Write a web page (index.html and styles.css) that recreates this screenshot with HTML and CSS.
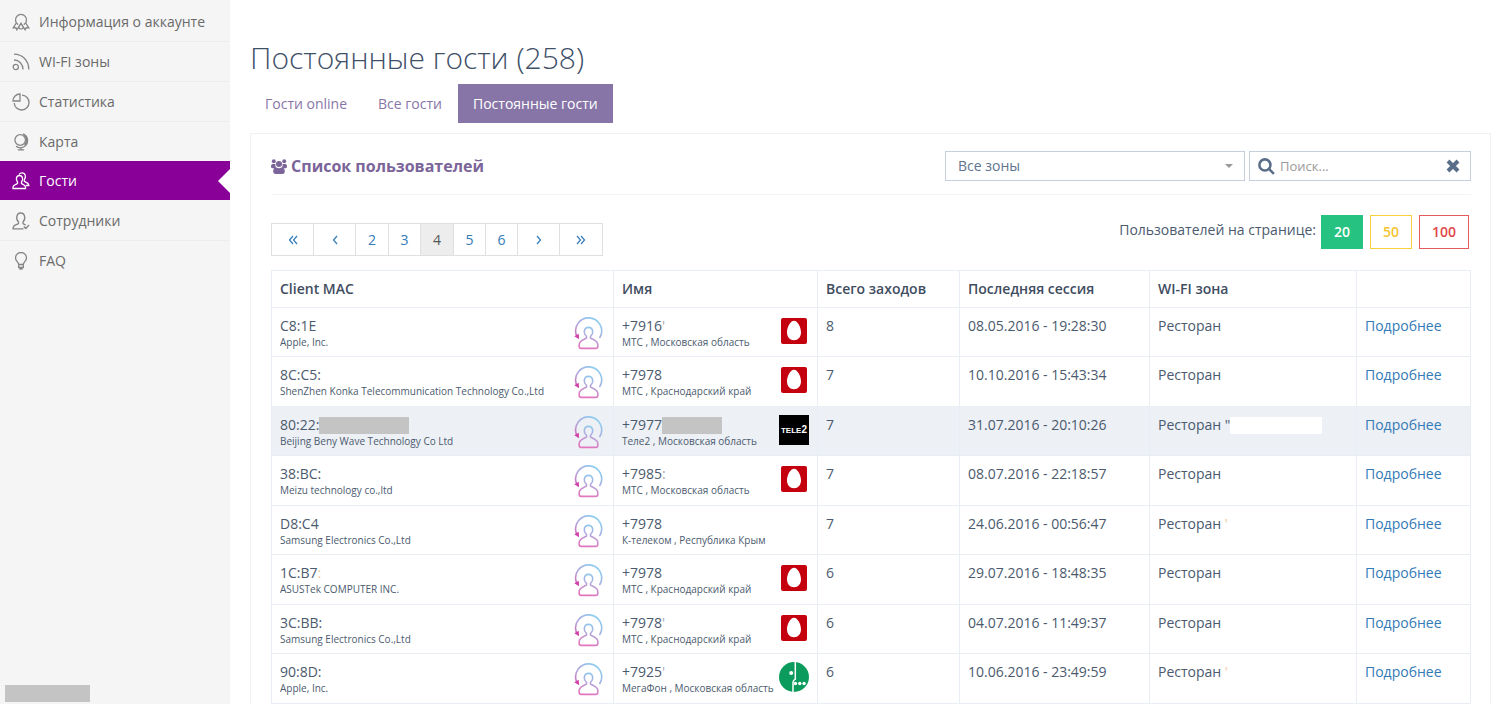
FILE: index.html
```
<!DOCTYPE html>
<html lang="ru">
<head>
<meta charset="utf-8">
<title>Постоянные гости</title>
<meta name="viewport" content="width=device-width, initial-scale=1">
<link rel="stylesheet" href="styles.css">
</head>
<body>
<svg class="sprite" width="0" height="0" aria-hidden="true">
  <defs>
    <linearGradient id="guest-arc" gradientUnits="userSpaceOnUse" x1="20" y1="2" x2="2" y2="24">
      <stop offset="0" stop-color="#8ecdf0"/>
      <stop offset="0.55" stop-color="#b3a6dc"/>
      <stop offset="1" stop-color="#d060b4"/>
    </linearGradient>
    <linearGradient id="guest-body" gradientUnits="userSpaceOnUse" x1="17" y1="11" x2="12" y2="32">
      <stop offset="0" stop-color="#8fcaee"/>
      <stop offset="0.5" stop-color="#b8a2da"/>
      <stop offset="1" stop-color="#e276bd"/>
    </linearGradient>
    <symbol id="guest" viewBox="0 0 30 34">
      <path d="M2.500 19.500A13 13 0 1 1 25.800 21.500" fill="none" stroke="url(#guest-arc)" stroke-width="1.600" stroke-linecap="round"/>
      <path d="M0.300 20.300 4.800 17.800 5 23.200Z" fill="#d23fa8"/>
      <path d="M12.500 22v-1.600c-1.700-1.400-2.400-3.200-2.200-5 .3-2.500 1.900-4 4.200-4s3.900 1.500 4.200 4c.2 1.800-.5 3.600-2.200 5V22c2.800 1.600 7.300 2.600 7.300 6.500v2c0 1.200-.8 1.900-1.900 1.900H7.100c-1.100 0-1.900-.7-1.900-1.900v-2c0-3.900 4.500-4.900 7.300-6.500Z" fill="none" stroke="url(#guest-body)" stroke-width="1.600" stroke-linejoin="round"/>
    </symbol>
    <symbol id="mts" viewBox="0 0 30 30">
      <rect x="2" y="2" width="26" height="26" rx="2" fill="#c4000f"/>
      <path d="M15 4.800c3.500 0 7 6.200 7 11.500 0 4.800-2.900 8-7 8s-7-3.200-7-8c0-5.300 3.500-11.500 7-11.500Z" fill="#fff"/>
    </symbol>
    <symbol id="megafon" viewBox="0 0 30 30">
      <circle cx="15" cy="15" r="15" fill="#0b9c5d"/>
      <path d="M16.300 0v17.200c-1.600.8-2.300 1.800-2.300 3.300V30" fill="none" stroke="#fff" stroke-width="1.500"/>
      <circle cx="12.200" cy="11" r="2" fill="#fff"/>
      <circle cx="16.500" cy="21.500" r="1.700" fill="#fff"/>
      <circle cx="20.800" cy="21.500" r="1.700" fill="#fff"/>
      <circle cx="25.100" cy="21.500" r="1.700" fill="#fff"/>
    </symbol>
  </defs>
</svg>

<div class="layout">
  <aside class="sidebar">
    <nav class="menu">
      <a class="menu-item" href="#"><svg class="menu-icon" viewBox="0 0 18 18"><path d="M6.200 11.600a5.500 5.500 0 1 1 5.600 0"/><path d="M4.300 10 1.200 14.800l2.600-.1 1.100 2.100L9 10.300l4.100 6.500 1.100-2.100 2.600.1L13.700 10M9 10.300 6.500 14.500l2.200 1.800M9 10.300l2.500 4.200-2.200 1.800"/></svg>Информация о аккаунте</a>
      <a class="menu-item" href="#"><svg class="menu-icon" viewBox="0 0 18 18"><circle cx="3.800" cy="14" r="2.600"/><path d="M2 7c5 0 9 4 9 9.500M2 1.200c8.500 0 14.800 6.500 14.800 15.300"/></svg>WI-FI зоны</a>
      <a class="menu-item" href="#"><svg class="menu-icon" viewBox="0 0 18 18"><path d="M10 2.200A7.400 7.400 0 1 1 2.200 10"/><path d="M8 1v7H1A7 7 0 0 1 8 1Z"/></svg>Статистика</a>
      <a class="menu-item" href="#"><svg class="menu-icon" viewBox="0 0 18 18"><circle cx="8.200" cy="7" r="5.300"/><path d="M11 .8a7.300 7.300 0 0 1 4.600 6.700 7.200 7.200 0 0 1-11.600 5.700M12.500 2.300a6.800 6.800 0 0 1 0 9.500M9 14.500v2M5.800 16.800h6.400"/></svg>Карта</a>
      <a class="menu-item active" href="#" aria-current="page"><svg class="menu-icon" viewBox="0 0 18 18"><path d="M5.500 11.500V10C3.600 7.800 4 3.500 7.500 3.500s3.900 4.300 2 6.500v1.500c1.200 1 4 1.200 4 3.500v1.500H1V15c0-2.300 3.300-2.500 4.500-3.500Z"/><path d="M7 2.500C7.700 1.300 8.900.8 10 .8c3.700 0 4.200 4.400 2.300 6.900v1.600c1.200 1 4.500 1.200 4.500 4.200h-3"/></svg>Гости</a>
      <a class="menu-item" href="#"><svg class="menu-icon" viewBox="0 0 18 18"><path d="M11.500 16.800H1c0-4.500 3.800-3.500 5.500-5.300V10C3.800 7.500 4 1 8.700 1s5 6.500 2.300 9v1.500c.8.800 1.800.9 2.800 1.300M11.800 14.500l2 2L17 13"/></svg>Сотрудники</a>
      <a class="menu-item" href="#"><svg class="menu-icon" viewBox="0 0 18 18"><path d="M6.700 12.500C6.700 10 3.500 9 3.500 6a5.500 5.500 0 0 1 11 0c0 3-3.200 4-3.200 6.500ZM6.700 12.500v3h4.600v-3M7.500 17h3"/></svg>FAQ</a>
    </nav>
    <div class="sidebar-mask"></div>
  </aside>

  <main class="content">
    <h1 class="page-title">Постоянные гости (258)</h1>
    <nav class="tabs">
      <a class="tab" href="#">Гости online</a>
      <a class="tab" href="#">Все гости</a>
      <a class="tab current" href="#" aria-current="page">Постоянные гости</a>
    </nav>

    <section class="panel">
      <header class="panel-head">
        <h2 class="panel-title"><svg class="users-icon" viewBox="0 0 16 15" aria-hidden="true"><circle cx="2.800" cy="2.300" r="2"/><circle cx="13.200" cy="2.300" r="2"/><circle cx="8" cy="5" r="3"/><path d="M1.500 5h3c-.4 1.500 0 2.500.8 3.300-1 0-1.600.3-2 .9H1.500C.5 9.200 0 8.500 0 7.500S.5 5 1.500 5ZM14.500 5h-3c.4 1.500 0 2.500-.8 3.300 1 0 1.600.3 2 .9h1.800c1 0 1.500-.7 1.500-1.700S15.500 5 14.500 5ZM5 8.200c2 1.300 4 1.300 6 0 2 .2 2.800 2.200 2.800 4.300 0 1.500-1 2.500-2.300 2.500h-7c-1.300 0-2.300-1-2.300-2.500 0-2.100.8-4.100 2.800-4.300Z"/></svg>Список пользователей</h2>
        <div class="filters">
          <div class="select-wrap">
            <select class="zone-select" aria-label="Зона"><option>Все зоны</option></select>
          </div>
          <div class="search">
            <svg class="search-icon" viewBox="0 0 16 16" aria-hidden="true"><circle cx="6.500" cy="6.500" r="5.200"/><path d="m10.500 10.500 4.500 4.500"/></svg>
            <input class="search-input" type="text" placeholder="Поиск..." aria-label="Поиск">
            <button class="clear" type="button" aria-label="Очистить"><svg class="clear-icon" viewBox="0 0 14 14"><path d="m2 2 10 10M12 2 2 12"/></svg></button>
          </div>
        </div>
      </header>

      <div class="toolbar">
        <nav class="pager" aria-label="Страницы">
          <a class="page wide" href="#" aria-label="Первая"><svg class="chevron" viewBox="0 0 10 10"><path d="M5 1 1.500 5 5 9M9 1 5.500 5 9 9"/></svg></a>
          <a class="page wide" href="#" aria-label="Назад"><svg class="chevron" viewBox="0 0 10 10"><path d="M7 1 3.500 5 7 9"/></svg></a>
          <a class="page" href="#">2</a>
          <a class="page" href="#">3</a>
          <a class="page here" href="#" aria-current="page">4</a>
          <a class="page" href="#">5</a>
          <a class="page" href="#">6</a>
          <a class="page wide" href="#" aria-label="Вперёд"><svg class="chevron" viewBox="0 0 10 10"><path d="M3 1 6.500 5 3 9"/></svg></a>
          <a class="page wide" href="#" aria-label="Последняя"><svg class="chevron" viewBox="0 0 10 10"><path d="M1 1l3.500 4L1 9M5 1l3.500 4L5 9"/></svg></a>
        </nav>
        <div class="per-page">
          <span class="per-page-label">Пользователей на странице:</span>
          <button class="size green" type="button">20</button>
          <button class="size yellow" type="button">50</button>
          <button class="size red" type="button">100</button>
        </div>
      </div>

      <table class="guests">
        <colgroup><col><col class="col-name"><col class="col-visits"><col class="col-session"><col class="col-zone"><col class="col-more"></colgroup>
        <thead>
          <tr><th>Client MAC</th><th>Имя</th><th>Всего заходов</th><th>Последняя сессия</th><th>WI-FI зона</th><th></th></tr>
        </thead>
        <tbody>
          <tr>
            <td><div class="cell"><div>C8:1E<small>Apple, Inc.</small></div><svg class="guest-icon"><use href="#guest"/></svg></div></td>
            <td><div class="cell"><div>+7916<span class="mark">'</span><small>МТС , Московская область</small></div><svg class="operator"><use href="#mts"/></svg></div></td>
            <td>8</td><td>08.05.2016 - 19:28:30</td><td>Ресторан</td><td><a href="#">Подробнее</a></td>
          </tr>
          <tr>
            <td><div class="cell"><div>8C:C5:<small>ShenZhen Konka Telecommunication Technology Co.,Ltd</small></div><svg class="guest-icon"><use href="#guest"/></svg></div></td>
            <td><div class="cell"><div>+7978<small>МТС , Краснодарский край</small></div><svg class="operator"><use href="#mts"/></svg></div></td>
            <td>7</td><td>10.10.2016 - 15:43:34</td><td>Ресторан</td><td><a href="#">Подробнее</a></td>
          </tr>
          <tr class="hovered">
            <td><div class="cell"><div>80:22:<span class="mask mask-mac"></span><small>Beijing Beny Wave Technology Co Ltd</small></div><svg class="guest-icon"><use href="#guest"/></svg></div></td>
            <td><div class="cell"><div>+7977<span class="mask mask-phone"></span><small>Теле2 , Московская область</small></div><span class="operator tele2">TELE<span class="two">2</span></span></div></td>
            <td>7</td><td>31.07.2016 - 20:10:26</td><td>Ресторан "<span class="mask mask-zone"></span></td><td><a href="#">Подробнее</a></td>
          </tr>
          <tr>
            <td><div class="cell"><div>38:BC:<small>Meizu technology co.,ltd</small></div><svg class="guest-icon"><use href="#guest"/></svg></div></td>
            <td><div class="cell"><div>+7985<span class="mark">:</span><small>МТС , Московская область</small></div><svg class="operator"><use href="#mts"/></svg></div></td>
            <td>7</td><td>08.07.2016 - 22:18:57</td><td>Ресторан</td><td><a href="#">Подробнее</a></td>
          </tr>
          <tr>
            <td><div class="cell"><div>D8:C4<small>Samsung Electronics Co.,Ltd</small></div><svg class="guest-icon"><use href="#guest"/></svg></div></td>
            <td><div class="cell"><div>+7978<small>К-телеком , Республика Крым</small></div></div></td>
            <td>7</td><td>24.06.2016 - 00:56:47</td><td>Ресторан <span class="tint">'</span></td><td><a href="#">Подробнее</a></td>
          </tr>
          <tr>
            <td><div class="cell"><div>1C:B7<span class="tint">:</span><small>ASUSTek COMPUTER INC.</small></div><svg class="guest-icon"><use href="#guest"/></svg></div></td>
            <td><div class="cell"><div>+7978<small>МТС , Краснодарский край</small></div><svg class="operator"><use href="#mts"/></svg></div></td>
            <td>6</td><td>29.07.2016 - 18:48:35</td><td>Ресторан</td><td><a href="#">Подробнее</a></td>
          </tr>
          <tr>
            <td><div class="cell"><div>3C:BB:<small>Samsung Electronics Co.,Ltd</small></div><svg class="guest-icon"><use href="#guest"/></svg></div></td>
            <td><div class="cell"><div>+7978<span class="mark">'</span><small>МТС , Краснодарский край</small></div><svg class="operator"><use href="#mts"/></svg></div></td>
            <td>6</td><td>04.07.2016 - 11:49:37</td><td>Ресторан</td><td><a href="#">Подробнее</a></td>
          </tr>
          <tr>
            <td><div class="cell"><div>90:8D:<small>Apple, Inc.</small></div><svg class="guest-icon"><use href="#guest"/></svg></div></td>
            <td><div class="cell"><div>+7925<span class="mark">'</span><small>МегаФон , Московская область</small></div><svg class="operator"><use href="#megafon"/></svg></div></td>
            <td>6</td><td>10.06.2016 - 23:49:59</td><td>Ресторан <span class="tint">'</span></td><td><a href="#">Подробнее</a></td>
          </tr>
        </tbody>
      </table>
    </section>
  </main>
</div>
</body>
</html>
```
FILE: styles.css
```
* { box-sizing: border-box; }

body {
  margin: 0;
  background: #fff;
  color: #4b5a6e;
  font: 14px/20px "Open Sans", "Noto Sans", sans-serif;
}

a { color: #337ab7; text-decoration: none; }

.sprite { position: absolute; }

.layout { display: flex; height: 100vh; overflow: hidden; }

/* Sidebar */
.sidebar {
  flex: 0 0 230px;
  display: flex;
  flex-direction: column;
  justify-content: space-between;
  padding: 2px 0;
  background: #f5f5f5;
}

.menu-item {
  display: flex;
  align-items: center;
  gap: 9px;
  height: 40px;
  padding-left: 12px;
  border-bottom: 1px solid #ededed;
  color: #6a6a6a;
}

.menu-item:last-child { border-bottom: 0; }

.menu-icon {
  width: 18px;
  height: 18px;
  fill: none;
  stroke: #858585;
  stroke-width: 1.3;
}

.menu-item.active {
  position: relative;
  margin-top: -1px;
  border-color: #f5f5f5;
  background: #880097;
  color: #fff;
}

.active .menu-icon { stroke: #fff; }

.active::after {
  content: "";
  position: absolute;
  top: 8px;
  right: 0;
  border: 12px solid transparent;
  border-left: 0;
  border-right-color: #fff;
}

.sidebar-mask { width: 85px; height: 17px; margin-left: 5px; background: #c4c4c4; }

/* Main column */
.content { flex: 1; min-width: 0; padding: 38px 9px 0 20px; }

.page-title {
  margin: 0;
  color: #3f5069;
  font-size: 30px;
  font-weight: 300;
  line-height: 40px;
}

.tabs { display: flex; gap: 1px; margin: 6px 0 10px; }

.tab { padding: 10px 15px 9px; color: #8775a7; }

.tab.current { background: #8775a7; color: #fff; }

.panel { padding: 17px 19px 20px 20px; border: 1px solid #eff1f6; }

.panel-head {
  display: flex;
  justify-content: space-between;
  padding-bottom: 13px;
  border-bottom: 1px solid #f3f4f7;
}

.panel-title {
  display: flex;
  align-items: center;
  gap: 4px;
  height: 30px;
  margin: 0;
  color: #7a6499;
  font-size: 16px;
  font-weight: 700;
}

.users-icon { width: 16px; height: 15px; fill: #7a6499; }

.filters { display: flex; gap: 4px; }

.select-wrap { position: relative; }

.select-wrap::after {
  content: "";
  position: absolute;
  top: 13px;
  right: 12px;
  border: 4px solid transparent;
  border-top-color: #999;
  border-bottom: 0;
  pointer-events: none;
}

.zone-select {
  width: 300px;
  height: 30px;
  padding: 0 12px;
  border: 1px solid #c6cfdc;
  border-radius: 0;
  appearance: none;
  background: #fff;
  color: #61748d;
  font: inherit;
}

.search {
  display: flex;
  align-items: center;
  gap: 5px;
  width: 222px;
  height: 30px;
  padding: 0 10px 0 8px;
  border: 1px solid #c6cfdc;
}

.search-icon {
  flex: none;
  width: 17px;
  height: 17px;
  fill: none;
  stroke: #5a6e8a;
  stroke-width: 2.4;
}

.search-input {
  flex: 1;
  min-width: 0;
  padding: 0;
  border: 0;
  outline: 0;
  color: #61748d;
  font: inherit;
  font-size: 13px;
}

.search-input::placeholder { color: #9a9a9a; }

.clear { display: flex; padding: 0; border: 0; background: none; }

.clear-icon { width: 14px; height: 14px; stroke: #5a6e8a; stroke-width: 4; }

/* Paging */
.toolbar { display: flex; justify-content: space-between; margin: 20px 0 14px; }

.pager { display: flex; margin-top: 8px; border: 1px solid #e0e0e0; height: 33px; }

.page {
  display: flex;
  align-items: center;
  justify-content: center;
  width: 33px;
  border-right: 1px solid #e0e0e0;
}

.page.wide { width: 42px; }

.page:last-child { border-right: 0; }

.page:nth-child(4), .page:nth-child(6), .page:nth-child(7) { width: 32px; }

.page.here { background: #ededed; color: #555; }

.chevron { width: 10px; height: 10px; fill: none; stroke: #337ab7; stroke-width: 1.2; }

.per-page { display: flex; align-items: flex-start; gap: 7px; padding-right: 2px; }

.per-page-label { margin: 5px -2px 0 0; }

.size {
  height: 34px;
  padding: 0 12px;
  border: 1px solid;
  background: #fff;
  font: 600 14px/32px "Open Sans", "Noto Sans", sans-serif;
}

.size.green { border-color: #26c281; background: #26c281; color: #fff; }
.size.yellow { border-color: #f8cf3c; color: #f4c430; }
.size.red { border-color: #e35b5a; color: #e04848; }

/* Guests table */
.guests { width: 100%; border-collapse: collapse; table-layout: fixed; }

.col-name { width: 204px; }
.col-visits { width: 142px; }
.col-session { width: 190px; }
.col-zone { width: 207px; }
.col-more { width: 114px; }

.guests th, .guests td {
  padding: 8px;
  border: 1px solid #e9edf4;
  text-align: left;
  vertical-align: top;
  white-space: nowrap;
}

.guests th { height: 36px; color: #3f4d61; font-weight: 600; }

.guests td { height: 49px; padding-bottom: 0; }

.guests tr:nth-child(even) td { height: 50px; }

.hovered { background: #edf0f5; }

.cell { display: flex; justify-content: space-between; }

.cell small { display: block; font-size: 10px; line-height: 12px; }

.guest-icon { width: 30px; height: 34px; margin-right: 1px; }

.operator { width: 30px; height: 30px; }

.tele2 {
  background: #000;
  color: #fff;
  font: 700 8px/30px "Liberation Sans", sans-serif;
  text-align: center;
}

.two { font-size: 10px; }

.mask { display: inline-block; height: 17px; background: #c4c4c4; vertical-align: -4px; }

.mask-mac { width: 90px; }
.mask-phone { width: 60px; }
.mask-zone { width: 92px; background: #fff; }

.mark { color: #a3abb7; }

.tint { color: #f6c99a; }
```
